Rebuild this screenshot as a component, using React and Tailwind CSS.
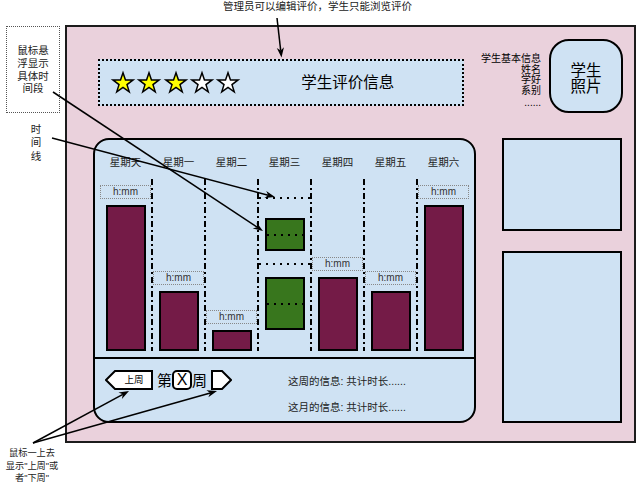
import React from "react";

const days = ["星期天", "星期一", "星期二", "星期三", "星期四", "星期五", "星期六"];
const bars = ["h-[146px]", "h-[60px]", "h-[21px]", null, "h-[74px]", "h-[60px]", "h-[146px]"];

function Star({ filled }) {
  return (
    <svg width="22" height="22" viewBox="0 0 22 22" className="overflow-visible shrink-0">
      <polygon
        points="11,0.8 13.47,7.9 21.1,7.96 14.99,12.6 17.25,19.9 11,15.5 4.75,19.9 7.01,12.6 0.9,7.96 8.53,7.9"
        fill={filled ? "#ffff00" : "#ffffff"}
        stroke="#000"
        strokeWidth="1.5"
      />
    </svg>
  );
}

function Divider() {
  return (
    <svg width="2" height="172" className="shrink-0">
      <line x1="1" y1="0" x2="1" y2="172" stroke="#000" strokeWidth="2" strokeDasharray="6 3 2 3" />
    </svg>
  );
}

function DotLine({ w }) {
  return (
    <svg width={w} height="2" className="shrink-0">
      <line x1="0" y1="1" x2={w} y2="1" stroke="#000" strokeWidth="2" strokeDasharray="2 5" />
    </svg>
  );
}

function BarCol({ h }) {
  return (
    <div className="w-[51px] shrink-0 flex flex-col justify-end items-center">
      <div className="w-full h-[14px] mb-[6px] border border-dotted border-[#888] flex items-center justify-center text-[10px] leading-none text-[#333]">
        h:mm
      </div>
      <div className={"w-[40px] border-2 border-black bg-[#741b47] " + h} />
    </div>
  );
}

function WedCol() {
  return (
    <div className="w-[51px] shrink-0 flex flex-col items-center pt-[18px]">
      <DotLine w={51} />
      <div className="mt-[19px] w-[40px] h-[33px] border-2 border-black bg-[#38761d] flex items-center justify-center">
        <DotLine w={36} />
      </div>
      <div className="mt-[12px] flex">
        <DotLine w={51} />
      </div>
      <div className="mt-[12px] w-[40px] h-[53px] border-2 border-black bg-[#38761d] flex items-center justify-center">
        <DotLine w={36} />
      </div>
    </div>
  );
}

function Arrow({ x1, y1, x2, y2 }) {
  const dx = x2 - x1;
  const dy = y2 - y1;
  const L = Math.hypot(dx, dy);
  const ux = dx / L;
  const uy = dy / L;
  const nx = -uy;
  const ny = ux;
  const hl = 10;
  const hw = 3.6;
  const notch = 7;
  const bx = x2 - ux * hl;
  const by = y2 - uy * hl;
  const mx = x2 - ux * notch;
  const my = y2 - uy * notch;
  return (
    <g>
      <line x1={x1} y1={y1} x2={mx} y2={my} stroke="#000" strokeWidth="1.5" />
      <polygon
        points={`${x2},${y2} ${bx + nx * hw},${by + ny * hw} ${mx},${my} ${bx - nx * hw},${by - ny * hw}`}
        fill="#000"
      />
    </g>
  );
}

export default function App() {
  return (
    <div className="relative w-[636px] h-[489px] bg-white overflow-hidden font-['Liberation_Sans','Noto_Sans_CJK_SC',sans-serif] text-black">
      {/* main frame */}
      <div className="ml-[65px] pt-[25px]">
        <div className="w-[571px] h-[418px] border-2 border-[#1c1c1c] bg-[#ead1dc]">
          {/* top row */}
          <div className="flex items-start h-[111px]">
            <div className="ml-[31px] mt-[32px] w-[366px] h-[47px] shrink-0 border-2 border-dotted border-black bg-[#cfe2f3] flex items-center pl-[12px]">
              <div className="flex items-center gap-[4.3px]">
                <Star filled />
                <Star filled />
                <Star filled />
                <Star />
                <Star />
              </div>
              <span className="ml-[62px] text-[15.5px] leading-none">学生评价信息</span>
            </div>
            <div className="ml-[13px] mt-[27px] w-[64px] shrink-0 text-right text-[10px] leading-[10.5px]">
              <div>学生基本信息</div>
              <div>姓名</div>
              <div>学好</div>
              <div>系别</div>
              <div className="mt-[2px]">......</div>
            </div>
            <div className="ml-[8px] mt-[12px] w-[74px] h-[74px] shrink-0 rounded-[20px] border-2 border-black bg-[#cfe2f3] flex items-center justify-center pt-[5px] text-center text-[15.5px] leading-[16px]">
              学生
              <br />
              照片
            </div>
          </div>

          {/* bottom row */}
          <div className="flex items-start">
            <div className="ml-[26px] w-[383px] h-[285px] shrink-0 border-2 border-black rounded-[16px] bg-[#cfe2f3] flex flex-col overflow-hidden">
              <div className="flex h-[39px] pl-[5px] pt-[5px] items-center">
                {days.map((d, i) => (
                  <React.Fragment key={d}>
                    {i > 0 && <div className="w-[2px] shrink-0" />}
                    <div className="w-[51px] shrink-0 text-center text-[10.5px] leading-none text-[#222]">{d}</div>
                  </React.Fragment>
                ))}
              </div>
              <div className="flex h-[172px] pl-[5px]">
                {days.map((d, i) => (
                  <React.Fragment key={d}>
                    {i > 0 && <Divider />}
                    {i === 3 ? <WedCol /> : <BarCol h={bars[i]} />}
                  </React.Fragment>
                ))}
              </div>
              <div className="mt-[6px] border-t-2 border-black flex items-start flex-1">
                <div className="ml-[10px] mt-[11px] flex items-center h-[20px]">
                  <div className="relative w-[48px] h-[20px] flex items-center justify-center pl-[10px]">
                    <svg className="absolute inset-0" width="48" height="20" viewBox="0 0 48 20">
                      <polygon points="1,10 10,1 47,1 47,19 10,19" fill="#fff" stroke="#000" strokeWidth="2" />
                    </svg>
                    <span className="relative text-[9.5px] leading-none">上周</span>
                  </div>
                  <span className="ml-[4px] text-[15px] leading-none">第</span>
                  <div className="w-[20px] h-[20px] border-2 border-black rounded-[5px] bg-white flex items-center justify-center text-[16px] leading-none">
                    X
                  </div>
                  <span className="text-[15px] leading-none">周</span>
                  <svg className="ml-[4px]" width="21" height="20" viewBox="0 0 21 20">
                    <polygon points="1,1 11,1 20,10 11,19 1,19" fill="#fff" stroke="#000" strokeWidth="2" />
                  </svg>
                </div>
                <div className="ml-[56px] mt-[9px] text-[10.5px] leading-[26px] text-[#222]">
                  <div>这周的信息: 共计时长......</div>
                  <div>这月的信息: 共计时长......</div>
                </div>
              </div>
            </div>
            <div className="ml-[26px] w-[120px] shrink-0 flex flex-col gap-[20px]">
              <div className="h-[93px] border-2 border-black bg-[#cfe2f3]" />
              <div className="h-[172px] border-2 border-black bg-[#cfe2f3]" />
            </div>
          </div>
        </div>
      </div>

      {/* annotations on the canvas */}
      <div className="absolute left-[223px] top-0 text-[10.5px] leading-[12px] text-[#222] whitespace-nowrap">
        管理员可以编辑评价，学生只能浏览评价
      </div>
      <div className="absolute left-[6px] top-[26px] w-[54px] h-[87px] border border-dotted border-[#555] flex items-center justify-center text-center text-[10.5px] leading-[12.7px] text-[#222]">
        鼠标悬
        <br />
        浮显示
        <br />
        具体时
        <br />
        间段
      </div>
      <div className="absolute left-[26px] top-[123px] w-[20px] text-center text-[10.5px] leading-[13.3px] text-[#222]">
        时
        <br />
        间
        <br />
        线
      </div>
      <div className="absolute left-0 top-[447px] w-[64px] text-center text-[9.2px] leading-[12.5px] text-[#222] whitespace-nowrap">
        鼠标一上去
        <br />
        显示"上周"或
        <br />
        者"下周"
      </div>

      <svg className="absolute inset-0 pointer-events-none" width="636" height="489" viewBox="0 0 636 489">
        <Arrow x1={277} y1={18} x2={281.5} y2={57.5} />
        <Arrow x1={53} y1={92} x2={263} y2={231} />
        <Arrow x1={52} y1={138} x2={275} y2={197} />
        <Arrow x1={33} y1={443} x2={129} y2={391} />
        <Arrow x1={33} y1={443} x2={217} y2={391} />
      </svg>
    </div>
  );
}
